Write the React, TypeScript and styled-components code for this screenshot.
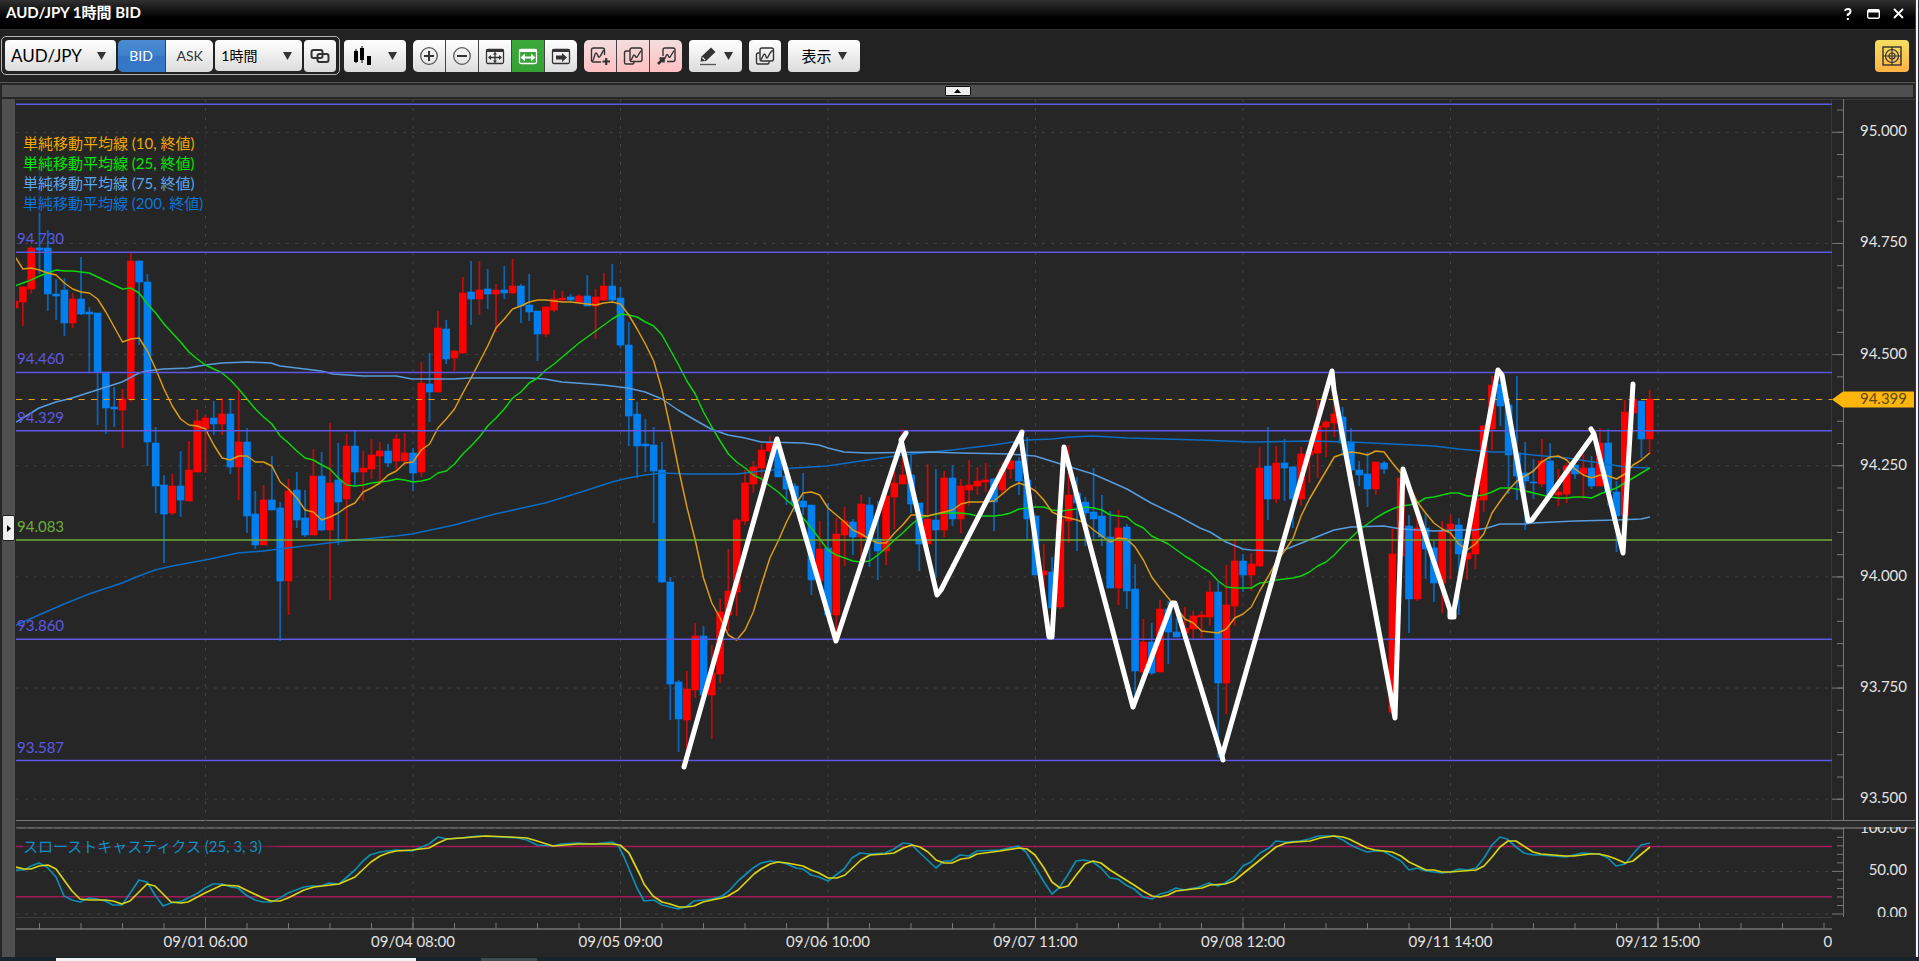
import React from "react";
import styled, { createGlobalStyle, css } from "styled-components";

const GlobalStyle = createGlobalStyle`
  *, *::before, *::after { box-sizing: border-box; }
  body { margin: 0; background: #16262c; }
  button, select { font: inherit; color: inherit; margin: 0; }
  svg { display: block; }
`;

const FONT = `Lato, "Noto Sans CJK JP", sans-serif`;

/* ---------- window ---------- */

const Desktop = styled.div`
  height: 100vh;
  min-height: 480px;
  display: grid;
  grid-template-columns: minmax(0, 1fr) 4px;
  grid-template-rows: minmax(0, 1fr) 4px;
  background: #16262c;
  font-family: ${FONT};
  font-size: 15px;
  line-height: 20px;
`;

const Window = styled.main`
  display: flex;
  flex-direction: column;
  min-width: 0;
  background: #262626;
`;

const NeighbourEdge = styled.div`
  border-left: 1px solid #1c4351;
  border-right: 1px solid #1c4351;
  background: #f4f4f4;
`;

const Taskbar = styled.div`
  grid-column: 1 / -1;
  display: flex;
  gap: 65px;
  padding: 1px 0 0 56px;
  background: #16262c;
`;

const TaskbarItem = styled.span<{ $width: number; $color: string }>`
  width: ${(p) => p.$width}px;
  background: ${(p) => p.$color};
`;

const TitleBar = styled.header`
  height: 29px;
  flex: none;
  display: flex;
  align-items: center;
  justify-content: space-between;
  padding: 0 9px 6px 6px;
  background: linear-gradient(#303030, #000 18px);
  color: #fff;
`;

const Title = styled.h1`
  margin: 0;
  font-size: 15px;
  font-weight: 700;
  line-height: 20px;
`;

const WindowControls = styled.div`
  display: flex;
  gap: 9px;
  padding-top: 4px;
`;

const WindowButton = styled.button`
  width: 16px;
  height: 16px;
  padding: 0;
  border: 0;
  background: none;
  color: #fff;
  display: grid;
  place-items: center;
`;

/* ---------- toolbar ---------- */

const Toolbar = styled.div`
  height: 54px;
  flex: none;
  display: flex;
  align-items: center;
  gap: 7px;
  padding: 0 6px 1px 1px;
  border-top: 1px solid #333;
  border-bottom: 1px solid #555;
  background: #222;
`;

const SymbolGroup = styled.div`
  display: flex;
  align-items: center;
  gap: 2px;
  height: 39px;
  width: 339px;
  padding: 0 3px;
  margin-right: -3px;
  border: 1px solid #b4b4b4;
  border-radius: 5px;
`;

const face = css`
  border: 0;
  background: linear-gradient(#fff, #dcdcdc);
  color: #000;
`;

const SelectBox = styled.label<{ $width: number; $size: number }>`
  display: grid;
  align-items: center;
  width: ${(p) => p.$width}px;
  height: 31px;
  font-size: ${(p) => p.$size}px;

  > select, > svg { grid-area: 1 / 1; }
  > svg { justify-self: end; margin-right: 10px; pointer-events: none; }
  > select {
    ${face}
    appearance: none;
    width: 100%;
    height: 100%;
    padding: 0 6px;
    border-radius: 4px;
  }
`;

const ButtonGroup = styled.div`
  display: flex;
  gap: 1px;
  border-radius: 5px;
  overflow: hidden;
  background: #444;
`;

type Tone = "plain" | "blue" | "green" | "pink" | "amber";

const tones: Record<Tone, string> = {
  plain: "linear-gradient(#fff, #dcdcdc)",
  blue: "linear-gradient(#4a8bd3, #3f80cb 48%, #3476c4 50%, #3578c8)",
  green: "linear-gradient(#3ba93b, #35a135)",
  pink: "linear-gradient(#f3dede, #ffbfc1)",
  amber: "linear-gradient(#f3df62, #ffb244)",
};

const ToolButton = styled.button<{ $width?: number; $tone?: Tone; $round?: boolean; $gap?: number }>`
  display: flex;
  align-items: center;
  justify-content: center;
  gap: ${(p) => p.$gap ?? 7}px;
  flex: none;
  width: ${(p) => p.$width ?? 32}px;
  height: 32px;
  padding: 0;
  border: 0;
  border-radius: ${(p) => (p.$round ? 4 : 0)}px;
  background: ${(p) => tones[p.$tone ?? "plain"]};
  color: ${(p) => (p.$tone === "blue" || p.$tone === "green" ? "#fff" : "#333")};
`;

const Caption = styled.span<{ $size?: number }>`
  color: ${(p) => (p.$size ? "inherit" : "#000")};
  font-size: ${(p) => p.$size ?? 15}px;
`;

const Spacer = styled.span`
  flex: 1;
`;

/* ---------- chart frame ---------- */

const TopStrip = styled.div`
  flex: none;
  height: 12px;
  margin: 2px;
  display: flex;
  justify-content: center;
  background: #4f4f4f;
`;

const StripHandle = styled.button`
  width: 26px;
  height: 10px;
  margin-top: 1px;
  padding: 0;
  border: 1px solid #111;
  border-radius: 1px;
  background: #eee;
  display: grid;
  place-items: center;
`;

const Body = styled.div`
  flex: 1;
  min-height: 0;
  display: grid;
  grid-template-columns: 13px minmax(0, 1fr);
  gap: 1px;
  padding-left: 2px;
`;

const SideStrip = styled.div`
  display: flex;
  align-items: center;
  background: #4f4f4f;
`;

const SideHandle = styled.button`
  width: 13px;
  height: 26px;
  padding: 0;
  border: 1px solid #222;
  border-radius: 2px;
  background: #eee;
  display: grid;
  place-items: center;
`;

const Panels = styled.div`
  display: grid;
  grid-template-columns: minmax(0, 1fr) 83px;
  grid-template-rows: minmax(0, 1fr) 6px 90px 40px;
`;

const Splitter = styled.div`
  grid-column: 1 / -1;
  border-top: 1px solid #777;
  margin: -1px 0 0;
  background: #2b2b2b;
`;

const Panel = styled.section<{ $sub?: boolean }>`
  position: relative;
  min-width: 0;
  min-height: 0;
  overflow: hidden;
  box-shadow: ${(p) => (p.$sub ? "inset 0 2px #5c5c5c" : "inset 0 1px #3a3a3a")};
  > svg { position: absolute; inset: 0; width: 100%; height: 100%; }
`;

const Legend = styled.ul<{ $top: number; $width: number }>`
  position: absolute;
  left: 7px;
  top: ${(p) => p.$top}px;
  width: ${(p) => p.$width}px;
  margin: 0;
  padding: 0;
  list-style: none;
  background: linear-gradient(90deg, rgba(38, 38, 38, 0.7) 90%, rgba(38, 38, 38, 0));
`;

const LegendItem = styled.li<{ $color: string }>`
  color: ${(p) => p.$color};
  white-space: nowrap;
  height: 20px;
`;

const AxisSvg = styled.svg`
  width: 100%;
  height: 100%;
  overflow: hidden;
  font-family: ${FONT};
  font-size: 15px;
`;

/* ---------- data ---------- */

type Candle = [up: 0 | 1, high: number, top: number, bottom: number, low: number];

const FIRST_X = 22.9;
const STEP = 8.3;
const candleX = (i: number) => FIRST_X + STEP * (i - 1);

const candles: Candle[] = [
  [1, 299, 301, 308, 310], [1, 286, 287, 302, 326], [1, 246, 248, 289, 294], [0, 167, 248, 250, 274],
  [0, 230, 248, 294, 311], [0, 279, 294, 296, 320], [0, 278, 290, 323, 336], [1, 293, 299, 323, 328],
  [0, 257, 299, 314, 315], [0, 307, 312, 314, 373], [0, 313, 313, 372, 425], [0, 372, 372, 408, 434],
  [0, 387, 407, 409, 427], [1, 389, 399, 410, 448], [1, 252, 261, 399, 402], [0, 261, 261, 282, 345],
  [0, 274, 282, 442, 466], [0, 427, 443, 486, 513], [0, 475, 485, 514, 563], [1, 474, 486, 513, 515],
  [0, 451, 486, 500, 517], [1, 441, 470, 501, 501], [1, 409, 421, 472, 472], [1, 415, 418, 429, 473],
  [0, 401, 418, 424, 435], [1, 398, 414, 424, 435], [0, 398, 414, 467, 474], [1, 390, 442, 467, 500],
  [0, 428, 442, 516, 533], [0, 491, 514, 545, 549], [1, 485, 500, 545, 545], [0, 456, 500, 510, 510],
  [0, 502, 508, 581, 641], [1, 479, 491, 581, 615], [0, 472, 490, 520, 528], [0, 490, 518, 535, 537],
  [1, 449, 476, 535, 535], [0, 452, 476, 530, 531], [1, 423, 483, 530, 600], [0, 443, 480, 502, 545],
  [1, 434, 446, 499, 540], [0, 431, 446, 472, 487], [1, 451, 468, 472, 501], [1, 439, 455, 469, 479],
  [1, 442, 451, 456, 482], [0, 444, 451, 463, 467], [1, 434, 439, 461, 470], [1, 433, 453, 461, 465],
  [0, 448, 453, 473, 491], [1, 362, 383, 472, 477], [0, 353, 384, 392, 422], [1, 311, 328, 392, 392],
  [0, 320, 329, 359, 364], [1, 350, 351, 358, 371], [1, 277, 293, 353, 354], [0, 261, 292, 299, 325],
  [1, 261, 290, 299, 315], [0, 269, 289, 294, 309], [1, 284, 290, 294, 332], [0, 266, 290, 293, 299],
  [1, 259, 286, 293, 294], [0, 284, 286, 306, 323], [0, 274, 305, 312, 321], [0, 311, 311, 334, 361],
  [1, 306, 307, 334, 337], [1, 290, 299, 310, 312], [1, 291, 298, 300, 301], [0, 294, 297, 300, 302],
  [1, 294, 296, 302, 302], [0, 275, 296, 306, 306], [1, 289, 297, 306, 339], [1, 273, 286, 300, 301],
  [0, 264, 286, 300, 302], [0, 287, 298, 345, 348], [0, 322, 345, 416, 446], [0, 402, 414, 446, 478],
  [0, 419, 444, 446, 472], [0, 427, 445, 471, 523], [0, 442, 470, 582, 583], [0, 577, 582, 684, 720],
  [0, 680, 682, 719, 752], [1, 671, 689, 720, 757], [1, 623, 636, 690, 698], [0, 626, 636, 695, 695],
  [1, 645, 673, 695, 739], [1, 599, 612, 674, 683], [1, 549, 591, 615, 631], [1, 518, 520, 592, 616],
  [1, 470, 483, 521, 525], [1, 461, 467, 484, 493], [1, 444, 450, 468, 491], [1, 436, 443, 451, 460],
  [0, 441, 447, 477, 477], [0, 469, 476, 489, 505], [0, 483, 486, 503, 512], [0, 473, 501, 507, 515],
  [0, 505, 505, 580, 595], [1, 521, 549, 581, 588], [0, 503, 548, 615, 622], [1, 518, 534, 615, 633],
  [1, 507, 521, 535, 566], [0, 519, 522, 537, 555], [1, 495, 504, 537, 562], [0, 497, 505, 539, 567],
  [0, 501, 539, 551, 580], [1, 482, 496, 551, 565], [1, 472, 483, 497, 529], [1, 429, 475, 484, 484],
  [0, 454, 475, 504, 513], [0, 503, 503, 544, 571], [1, 464, 519, 544, 544], [0, 469, 520, 530, 577],
  [1, 471, 478, 530, 537], [0, 465, 478, 519, 526], [1, 479, 486, 519, 533], [1, 460, 485, 490, 506],
  [1, 467, 481, 486, 495], [1, 463, 480, 482, 492], [0, 478, 479, 502, 531], [1, 462, 469, 490, 495],
  [1, 460, 461, 469, 479], [0, 457, 461, 481, 495], [0, 437, 480, 519, 540], [0, 516, 516, 575, 575],
  [1, 544, 571, 575, 613], [0, 557, 572, 608, 633], [1, 517, 519, 607, 609], [1, 445, 495, 521, 543],
  [0, 477, 493, 503, 551], [0, 497, 502, 513, 546], [0, 468, 512, 519, 539], [0, 495, 516, 537, 546],
  [0, 511, 537, 588, 588], [1, 510, 528, 588, 605], [0, 524, 527, 591, 609], [0, 564, 589, 671, 697],
  [1, 619, 642, 672, 672], [0, 623, 642, 673, 675], [1, 600, 609, 672, 672], [0, 601, 609, 632, 664],
  [0, 618, 632, 637, 637], [1, 607, 628, 633, 637], [1, 611, 616, 629, 639], [1, 611, 615, 617, 638],
  [1, 581, 592, 617, 626], [0, 582, 592, 683, 758], [1, 565, 605, 683, 714], [1, 539, 561, 606, 626],
  [0, 554, 561, 575, 592], [1, 553, 564, 575, 591], [1, 447, 468, 566, 567], [0, 427, 466, 499, 520],
  [1, 446, 463, 499, 503], [0, 439, 463, 468, 501], [0, 466, 467, 499, 528], [1, 447, 454, 499, 506],
  [1, 439, 451, 455, 483], [1, 400, 426, 453, 478], [1, 420, 422, 427, 457], [1, 390, 414, 423, 437],
  [0, 407, 417, 443, 456], [0, 428, 442, 470, 473], [0, 461, 470, 475, 486], [0, 452, 474, 489, 507],
  [1, 462, 462, 489, 495], [0, 461, 463, 469, 474], [1, 529, 554, 712, 713], [1, 477, 478, 556, 556],
  [0, 515, 526, 599, 633], [1, 518, 528, 599, 601], [0, 514, 528, 549, 579], [0, 541, 548, 583, 602],
  [1, 521, 531, 583, 613], [1, 515, 524, 529, 579], [0, 518, 525, 554, 615], [1, 548, 553, 559, 580],
  [1, 478, 498, 554, 569], [1, 425, 426, 500, 512], [1, 376, 385, 429, 450], [0, 378, 384, 406, 426],
  [0, 403, 405, 455, 494], [0, 376, 453, 476, 500], [0, 442, 473, 481, 530], [0, 459, 482, 483, 499],
  [1, 439, 461, 484, 487], [0, 443, 461, 495, 495], [1, 469, 492, 495, 506], [1, 463, 466, 494, 503],
  [0, 460, 465, 474, 479], [1, 454, 468, 474, 499], [0, 456, 468, 486, 489], [1, 428, 443, 486, 486],
  [0, 429, 443, 492, 506], [0, 481, 492, 516, 552], [1, 400, 412, 515, 540], [1, 395, 399, 413, 433],
  [0, 401, 401, 439, 458], [1, 390, 399, 439, 454],
];

const sma10 = [
  256, 269, 268, 270, 273, 275, 283, 289, 292, 293, 299, 312, 327, 342, 339, 338, 351, 369, 389, 406, 419, 425, 426,
  429, 445, 458, 460, 456, 456, 462, 462, 466, 482, 489, 498, 510, 512, 520, 517, 513, 507, 503, 492, 488, 483, 475,
  471, 463, 462, 450, 444, 428, 419, 409, 393, 378, 362, 346, 328, 319, 309, 306, 302, 300, 300, 301, 302, 302, 303,
  304, 305, 303, 302, 304, 315, 329, 344, 361, 390, 428, 469, 507, 540, 578, 603, 618, 635, 640, 630, 612, 584, 558,
  541, 522, 506, 493, 492, 495, 508, 515, 522, 530, 534, 539, 543, 543, 533, 525, 515, 515, 516, 514, 512, 510, 504,
  502, 502, 502, 501, 494, 487, 483, 486, 491, 500, 512, 516, 518, 520, 523, 530, 536, 542, 538, 539, 547, 560, 577,
  588, 598, 608, 619, 623, 631, 632, 633, 629, 618, 614, 607, 591, 577, 562, 551, 539, 516, 499, 485, 471, 457, 454,
  452, 453, 455, 451, 452, 463, 473, 485, 502, 513, 523, 529, 533, 544, 550, 544, 534, 513, 501, 490, 481, 476, 471,
  462, 457, 456, 460, 469, 475, 478, 475, 476, 479, 474, 465, 460, 453,
];

const sma25 = [
  286, 283, 280, 276, 273, 270, 271, 271, 272, 273, 277, 281, 285, 289, 288, 293, 304, 313, 324, 333, 342, 352, 359,
  365, 369, 373, 380, 389, 399, 409, 417, 424, 436, 443, 451, 458, 460, 465, 469, 478, 485, 486, 485, 483, 482, 481,
  479, 480, 482, 481, 479, 473, 471, 464, 454, 446, 437, 426, 418, 409, 398, 392, 383, 378, 370, 364, 357, 350, 343,
  337, 331, 325, 319, 314, 315, 317, 322, 326, 335, 350, 365, 381, 394, 412, 427, 441, 454, 462, 468, 475, 479, 486,
  492, 500, 507, 518, 528, 539, 550, 555, 558, 561, 562, 561, 555, 548, 540, 533, 525, 518, 516, 514, 513, 513, 513,
  514, 516, 516, 516, 515, 513, 509, 508, 507, 507, 510, 511, 510, 509, 507, 508, 510, 515, 516, 517, 524, 528, 536,
  540, 544, 550, 556, 561, 567, 572, 581, 587, 588, 588, 588, 583, 582, 580, 579, 578, 576, 572, 566, 562, 555, 546,
  538, 530, 524, 518, 513, 509, 506, 505, 503, 498, 497, 495, 493, 493, 496, 496, 495, 492, 488, 488, 489, 491, 493,
  495, 497, 498, 498, 497, 497, 498, 494, 491, 488, 483, 478, 473, 468,
];

const sma75 =
  "16,422 31,413 39,408 56,402 72,398 97,390 122,382 139,373 147,371 163,369 188,368 205,365 222,363 247,362 271,363 280,366 305,369 321,371 333,374 363,376 396,376 412,379 454,379 470,378 529,378 545,379 562,382 603,385 628,388 645,392 662,399 678,410 695,420 711,429 728,435 745,438 761,442 803,443 819,445 828,448 844,452 867,453 930,452 960,453 1010,454 1035,456 1067,466 1093,474 1127,489 1151,503 1176,515 1200,528 1210,532 1226,542 1243,549 1251,550 1277,551 1284,550 1309,540 1334,530 1351,527 1384,526 1401,529 1434,531 1459,530 1475,530 1487,528 1500,524 1525,524 1533,523 1575,521 1616,520 1641,519 1650,517";

const sma200 =
  "16,625 39,615 64,604 89,594 122,583 139,576 155,570 172,566 205,560 238,553 263,551 296,547 329,543 354,540 396,536 412,534 454,525 495,514 545,503 578,493 612,482 628,478 645,475 662,473 687,474 737,474 761,471 794,468 827,466 861,461 902,455 952,450 993,445 1027,440 1052,439 1070,437 1093,436 1127,438 1200,440 1251,442 1309,441 1351,442 1392,444 1434,446 1459,449 1492,452 1508,452 1533,455 1567,458 1600,463 1625,467 1650,468";

const swing =
  "684,767 777,439 836,641 902,440 906,433 901,440 937,595 941,590 1022,432 1021,438 1049,637 1052,637 1064,447 1133,707 1172,603 1175,603 1223,760 1222,756 1332,371 1334,390 1395,718 1403,469 1450,610 1450,617 1454,617 1454,610 1498,370 1502,375 1528,521 1532,520 1594,434 1591,429 1594,434 1623,553 1633,384";

const slowK =
  "16,870 24,870 31,866 39,863 47,867 56,877 64,896 72,900 80,902 89,898 97,899 105,901 113,905 122,905 131,892 139,880 147,882 155,895 163,906 171,903 182,901 190,897 198,893 205,888 213,884 222,884 231,887 238,888 246,895 255,900 263,902 271,902 280,898 288,893 296,890 304,887 312,886 321,886 329,883 339,884 347,877 355,870 363,861 370,855 380,852 388,851 396,850 412,851 429,844 438,837 447,839 461,838 478,836 502,837 518,838 527,840 537,845 553,846 561,844 578,843 594,844 612,842 618,845 624,857 637,888 644,901 654,900 662,905 678,909 686,907 694,901 703,900 712,899 722,896 729,891 738,881 753,868 761,863 770,861 779,862 787,864 796,868 803,869 811,875 819,877 828,881 836,875 844,869 852,858 860,853 870,854 885,853 894,849 903,843 911,844 920,853 936,868 944,861 951,861 960,855 969,856 977,851 1000,850 1018,846 1026,852 1035,867 1044,882 1052,894 1059,888 1067,876 1076,861 1084,860 1093,862 1101,868 1110,878 1118,879 1126,885 1134,889 1143,897 1152,899 1160,894 1168,892 1176,888 1184,890 1199,887 1209,883 1218,886 1225,883 1234,877 1243,866 1251,862 1260,853 1269,848 1276,841 1286,842 1300,841 1309,839 1318,836 1334,836 1343,840 1349,844 1357,848 1367,852 1375,851 1383,851 1401,861 1409,870 1417,868 1426,871 1434,872 1442,873 1450,872 1459,869 1468,870 1476,868 1484,858 1492,845 1500,837 1507,839 1516,847 1524,853 1533,855 1541,855 1566,857 1582,853 1599,854 1608,858 1616,866 1625,864 1633,854 1641,845 1650,843";

const slowD =
  "16,867 24,869 31,869 39,866 48,865 56,869 72,891 80,899 89,900 105,900 113,901 122,904 130,901 147,884 155,886 163,894 171,902 181,903 188,902 205,893 222,885 238,886 246,890 263,898 271,901 280,901 288,898 304,890 314,887 339,884 355,877 371,862 380,856 388,853 396,851 412,850 429,848 438,843 447,839 461,838 486,836 510,837 527,838 537,841 553,846 578,844 594,844 612,844 620,845 629,853 640,875 644,884 653,896 662,902 670,904 679,907 686,907 694,906 703,902 712,900 722,898 728,896 738,890 754,874 761,869 770,864 778,862 787,863 803,866 811,870 819,873 828,878 837,878 845,875 861,860 870,855 885,854 894,853 903,848 912,845 920,847 928,852 936,860 944,863 952,863 961,859 969,858 977,854 1000,851 1019,848 1027,849 1035,855 1044,868 1052,882 1060,888 1068,886 1077,874 1085,864 1093,861 1101,863 1110,870 1126,880 1134,885 1143,891 1152,896 1160,897 1168,895 1176,891 1202,888 1210,885 1225,884 1234,881 1260,860 1276,847 1286,843 1295,842 1310,841 1320,838 1334,836 1343,837 1349,839 1359,844 1367,848 1375,850 1392,852 1401,856 1409,862 1426,870 1434,870 1442,872 1450,872 1476,870 1484,866 1492,857 1500,847 1508,841 1516,841 1533,852 1541,854 1566,856 1574,856 1590,854 1599,854 1608,856 1616,859 1625,863 1633,861 1650,847";

/* ---------- scales ---------- */

const PLOT = { left: 16, width: 1816, top: 99, height: 722 };
const SUB = { top: 827, height: 90 };

const priceY = (p: number) => 132.3 + (95 - p) * 444.6;
const stochY = (v: number) => 914 - v * 0.852;
const pct = (v: number, origin: number, size: number) => `${((v - origin) / size) * 100}%`;
const plotX = (x: number) => pct(x, PLOT.left, PLOT.width);
const plotY = (y: number) => pct(y, PLOT.top, PLOT.height);
const subY = (y: number) => pct(y, SUB.top, SUB.height);

const dates = ["09/01 06:00", "09/04 08:00", "09/05 09:00", "09/06 10:00", "09/07 11:00", "09/08 12:00", "09/11 14:00", "09/12 15:00", "09/13 16:00"];
const dateX = (i: number) => 205.5 + i * 207.5;
const majorPrices = [95, 94.75, 94.5, 94.25, 94, 93.75, 93.5];
const minorPrices = Array.from({ length: 33 }, (_, i) => 95.05 - i * 0.05);
const minorTimes = Array.from({ length: 44 }, (_, i) => 39.5 + i * 41.5);

const PURPLE = "#5d58e6";
const levels = [
  { price: 95.063, color: PURPLE, label: "" },
  { price: 94.73, color: PURPLE, label: "94.730" },
  { price: 94.46, color: PURPLE, label: "94.460" },
  { price: 94.329, color: PURPLE, label: "94.329" },
  { price: 94.083, color: "#6fae38", label: "94.083" },
  { price: 93.86, color: PURPLE, label: "93.860" },
  { price: 93.587, color: PURPLE, label: "93.587" },
];

const averages = [
  { name: "単純移動平均線 (10, 終値)", color: "#f0a800" },
  { name: "単純移動平均線 (25, 終値)", color: "#00e600" },
  { name: "単純移動平均線 (75, 終値)", color: "#5ba6ee" },
  { name: "単純移動平均線 (200, 終値)", color: "#0b74d6" },
];

const series = (values: number[]) => values.map((v, i) => `${candleX(i).toFixed(1)},${v}`).join(" ");

/* ---------- chart pieces ---------- */

function VerticalGrid() {
  return (
    <g stroke="#414141" strokeDasharray="3 6">
      {dates.slice(0, 8).map((d, i) => (
        <line key={d} x1={plotX(dateX(i))} x2={plotX(dateX(i))} y1="0" y2="100%" />
      ))}
    </g>
  );
}

function PriceChart() {
  return (
    <svg role="img" aria-label="AUD/JPY">
      <VerticalGrid />
      <g stroke="#414141" strokeDasharray="3 6">
        {majorPrices.map((p) => (
          <line key={p} x1="0" x2="100%" y1={plotY(priceY(p))} y2={plotY(priceY(p))} />
        ))}
      </g>
      <line x1="100%" x2="100%" y1="0" y2="100%" stroke="#4a4a4a" />
      <svg
        width="100%"
        height="100%"
        viewBox={`${PLOT.left} ${PLOT.top} ${PLOT.width} ${PLOT.height}`}
        preserveAspectRatio="none"
      >
        {candles.map(([up, high, top, bottom, low], i) => {
          const x = candleX(i);
          return (
            <g key={i} fill={up ? "#ff0000" : "#007ff0"}>
              <rect x={x - 0.9} y={high} width="1.8" height={low - high} opacity="0.7" />
              <rect x={x - 3.8} y={top - 0.3} width="7.6" height={Math.max(bottom - top, 1) + 0.6} />
            </g>
          );
        })}
        <g fill="none" strokeWidth="1.5" strokeLinejoin="round">
          <polyline points={sma200} stroke="#0b6cc4" />
          <polyline points={sma75} stroke="#579bdc" />
          <polyline points={series(sma25)} stroke="#0bd40b" />
          <polyline points={series(sma10)} stroke="#d99b16" />
        </g>
      </svg>
      {levels.map((l) => (
        <line
          key={l.price}
          x1="0"
          x2="100%"
          y1={plotY(priceY(l.price))}
          y2={plotY(priceY(l.price))}
          stroke={l.color}
          strokeWidth="1.5"
        />
      ))}
      <line
        x1="0"
        x2="100%"
        y1={plotY(399.5)}
        y2={plotY(399.5)}
        stroke="#e0a41c"
        strokeWidth="1.2"
        strokeDasharray="6.2 6.3"
      />
      <g fontFamily={FONT} fontSize="15">
        {levels.map((l) => (
          <text key={l.price} x="1" y={plotY(priceY(l.price))} dy="-8" fill={l.color}>
            {l.label}
          </text>
        ))}
      </g>
      <svg
        width="100%"
        height="100%"
        viewBox={`${PLOT.left} ${PLOT.top} ${PLOT.width} ${PLOT.height}`}
        preserveAspectRatio="none"
      >
        <polyline points={swing} fill="none" stroke="#fff" strokeWidth="5" strokeLinejoin="round" strokeLinecap="round" />
      </svg>
    </svg>
  );
}

function PriceAxis() {
  const y = plotY(399.5);
  return (
    <AxisSvg>
      <g stroke="#777">
        <line x1="11.5" x2="11.5" y1="0" y2="100%" />
        {minorPrices.map((p) => (
          <line key={p} x1="5" x2="11" y1={plotY(priceY(p))} y2={plotY(priceY(p))} />
        ))}
        {majorPrices.map((p) => (
          <line key={p} x1="0" x2="11" y1={plotY(priceY(p))} y2={plotY(priceY(p))} />
        ))}
      </g>
      <g fill="#e2e2e2" textAnchor="end">
        {majorPrices.map((p) => (
          <text key={p} x="75" y={plotY(priceY(p))} dy="4">
            {p.toFixed(3)}
          </text>
        ))}
      </g>
      <svg y={y} overflow="visible">
        <path d="M0 0L11-8H82V8H11Z" fill="#ffb60a" />
        <text x="75" y="4" textAnchor="end" fill="#5c4a1c">
          94.399
        </text>
      </svg>
    </AxisSvg>
  );
}

function Stochastic() {
  return (
    <svg role="img" aria-label="スローストキャスティクス">
      <VerticalGrid />
      <g stroke="#414141" strokeDasharray="3 6">
        {[100, 50, 0].map((v) => (
          <line key={v} x1="0" x2="100%" y1={subY(stochY(v))} y2={subY(stochY(v))} />
        ))}
      </g>
      <g stroke="#a4195a" strokeWidth="1.6">
        <line x1="0" x2="100%" y1={subY(846.5)} y2={subY(846.5)} />
        <line x1="0" x2="100%" y1={subY(896.7)} y2={subY(896.7)} />
      </g>
      <svg
        width="100%"
        height="100%"
        viewBox={`${PLOT.left} ${SUB.top} ${PLOT.width} ${SUB.height}`}
        preserveAspectRatio="none"
      >
        <g fill="none" strokeWidth="1.7" strokeLinejoin="round">
          <polyline points={slowK} stroke="#0f8db0" />
          <polyline points={slowD} stroke="#d6d414" />
        </g>
      </svg>
    </svg>
  );
}

function StochasticAxis() {
  const ticks = Array.from({ length: 11 }, (_, i) => i * 10);
  return (
    <AxisSvg>
      <g stroke="#777">
        <line x1="11.5" x2="11.5" y1="0" y2="100%" />
        {ticks.map((v) => (
          <line key={v} x1={v % 50 ? 5 : 0} x2="11" y1={subY(stochY(v))} y2={subY(stochY(v))} />
        ))}
      </g>
      <g fill="#e2e2e2" textAnchor="end">
        {[100, 50, 0].map((v) => (
          <text key={v} x="75" y={subY(stochY(v))} dy="4">
            {v.toFixed(2)}
          </text>
        ))}
      </g>
    </AxisSvg>
  );
}

function TimeAxis() {
  return (
    <AxisSvg>
      <line x1="0" x2="100%" y1="0.5" y2="0.5" stroke="#3c3c3c" />
      <g stroke="#777">
        <line x1="0" x2="100%" y1="12" y2="12" strokeWidth="1.4" />
        {minorTimes.map((x) => (
          <line key={x} x1={plotX(x)} x2={plotX(x)} y1="6" y2="12" />
        ))}
        {dates.map((d, i) => (
          <line key={d} x1={plotX(dateX(i))} x2={plotX(dateX(i))} y1="0" y2="12" />
        ))}
      </g>
      <g fill="#e2e2e2" textAnchor="middle">
        {dates.map((d, i) => (
          <text key={d} x={plotX(dateX(i))} y="30">
            {d}
          </text>
        ))}
      </g>
    </AxisSvg>
  );
}

/* ---------- icons ---------- */

const DownArrow = () => (
  <svg width="9" height="8" viewBox="0 0 9 8">
    <path d="M0 0H9L4.5 8Z" fill="#333" />
  </svg>
);

const Glyph = ({ children }: { children: React.ReactNode }) => (
  <svg width="20" height="20" viewBox="0 0 20 20" fill="none" stroke="currentColor">
    {children}
  </svg>
);

const LinkGlyph = () => (
  <Glyph>
    <rect x="1.5" y="4" width="11" height="8" rx="2" strokeWidth="2" />
    <rect x="7.5" y="8" width="11" height="8" rx="2" strokeWidth="2" />
  </Glyph>
);

const CandleGlyph = () => (
  <svg width="17" height="20" viewBox="0 0 17 20" fill="#000">
    <path d="M0 5h4v11H0zM1.500 3h1v14h-1zM6 2h4v12H6zM7.500 0h1v17h-1zM13 10h4v9h-4z" />
  </svg>
);

const ZoomGlyph = ({ plus }: { plus?: boolean }) => (
  <Glyph>
    <circle cx="10" cy="10" r="8.3" stroke="#555" strokeWidth="1.3" />
    <path d={plus ? "M5 10H15M10 5V15" : "M5 10H15"} strokeWidth="2" />
  </Glyph>
);

const PaneGlyph = ({ children }: { children: React.ReactNode }) => (
  <Glyph>
    <rect x="1.5" y="3.5" width="17" height="14" rx="1.5" strokeWidth="1.3" />
    <path d="M1.5 4.500H18.5" strokeWidth="3" />
    {children}
  </Glyph>
);

const FitAllGlyph = () => (
  <PaneGlyph>
    <path d="M4 11.500H16M10 6.500V16.500" strokeWidth="1.3" />
    <path d="M3 11.500l3-2.500v5zM17 11.500l-3-2.500v5zM10 6l-2 2.500h4zM10 17l-2-2.500h4z" fill="currentColor" stroke="none" />
  </PaneGlyph>
);

const FitWidthGlyph = () => (
  <PaneGlyph>
    <path d="M5 11.500H15" strokeWidth="2" />
    <path d="M2.500 11.500l4.500-4v8zM17.500 11.500l-4.500-4v8z" fill="currentColor" stroke="none" />
  </PaneGlyph>
);

const ShiftGlyph = () => (
  <PaneGlyph>
    <path d="M5 9.500h6V7l5 4.500-5 4.500v-2.500H5z" fill="currentColor" stroke="none" />
  </PaneGlyph>
);

const AddChartGlyph = () => (
  <Glyph>
    <path d="M11 16H3.500Q1.500 16 1.500 14V4Q1.500 2 3.500 2H12.500Q14.500 2 14.500 4V9" strokeWidth="1.4" />
    <path d="M2 15C4 15 4.500 7 6 7S8 12 9.500 11 12 6 14 4" strokeWidth="1.4" />
    <path d="M12.500 15.500H20M16.200 12V19" strokeWidth="2.2" />
  </Glyph>
);

const CopyChartGlyph = () => (
  <Glyph>
    <path d="M7 5H3Q1.500 5 1.500 6.500V16.500Q1.500 18 3 18H9.500Q11 18 11 16" strokeWidth="1.4" />
    <rect x="7" y="2" width="12" height="13.5" rx="2" strokeWidth="1.4" />
    <path d="M7.500 14C9.500 14 9.500 9 11 9S12.500 12.500 14 11 16.500 6 18.500 4.500" strokeWidth="1.4" />
  </Glyph>
);

const ExportChartGlyph = () => (
  <Glyph>
    <path d="M7 10V4Q7 2 9 2H17Q19 2 19 4V13.500Q19 15.500 17 15.500H11" strokeWidth="1.4" />
    <path d="M8 13C10 13 9.500 8.500 11 8.500S12.500 12.500 14 11 16.500 6 18.500 4.500" strokeWidth="1.4" />
    <path d="M2 18L7 13M3.500 12.500H7.500V16.500" strokeWidth="2.6" />
  </Glyph>
);

const PencilGlyph = () => (
  <svg width="18" height="20" viewBox="0 0 18 20" fill="#333">
    <path d="M1.500 15.500L2.500 10.500L12 1.500L16.500 6L7 15Z" />
    <path d="M3.500 11.500L6 14.200" stroke="#eee" strokeWidth="1.2" />
    <path d="M1 18.500H17" stroke="#555" strokeWidth="1.3" />
  </svg>
);

const LayersGlyph = () => (
  <Glyph>
    <path d="M5 7H3Q1.500 7 1.500 8.500V16.500Q1.500 18 3 18H12.500Q14 18 14 16.500V15.500" strokeWidth="1.4" />
    <rect x="5" y="2" width="13.5" height="13" rx="2" strokeWidth="1.4" />
    <path d="M5.500 14C7.500 13 8 8 9.500 8S10.500 12 12 12 14.500 5 18 4.500" strokeWidth="1.4" />
  </Glyph>
);

const TargetGlyph = () => (
  <Glyph>
    <rect x="1" y="1" width="18" height="18" strokeWidth="1.4" />
    <circle cx="10" cy="10" r="6.5" strokeWidth="1.2" />
    <circle cx="10" cy="10" r="3" strokeWidth="1.2" />
    <path d="M1 10H19M10 1V19" strokeWidth="1.2" />
  </Glyph>
);

/* ---------- page ---------- */

export default function App() {
  return (
    <Desktop>
      <GlobalStyle />
      <Window>
        <TitleBar>
          <Title>AUD/JPY 1時間 BID</Title>
          <WindowControls>
            <WindowButton aria-label="ヘルプ">
              <svg width="8" height="12" viewBox="0 0 8 12" fill="none" stroke="#fff" strokeWidth="2">
                <path d="M1 3Q1.500 1 4 1T6.500 3.200T3.800 6.500V8M3.800 10V12" />
              </svg>
            </WindowButton>
            <WindowButton aria-label="最大化">
              <svg width="13" height="10" viewBox="0 0 13 10" fill="none" stroke="#fff">
                <rect x="0.7" y="0.7" width="11.6" height="8.6" rx="1.5" strokeWidth="1.4" />
                <path d="M1 2H12" strokeWidth="3" />
              </svg>
            </WindowButton>
            <WindowButton aria-label="閉じる">
              <svg width="11" height="11" viewBox="0 0 11 11" fill="none" stroke="#fff" strokeWidth="1.8">
                <path d="M1 1L10 10M10 1L1 10" />
              </svg>
            </WindowButton>
          </WindowControls>
        </TitleBar>

        <Toolbar>
          <SymbolGroup>
            <SelectBox $width={111} $size={17}>
              <select aria-label="通貨ペア" defaultValue="AUD/JPY">
                <option>AUD/JPY</option>
              </select>
              <DownArrow />
            </SelectBox>
            <ButtonGroup>
              <ToolButton $width={47} $tone="blue">
                <Caption $size={14}>BID</Caption>
              </ToolButton>
              <ToolButton $width={48}>
                <Caption $size={14}>ASK</Caption>
              </ToolButton>
            </ButtonGroup>
            <SelectBox $width={87} $size={14}>
              <select aria-label="足種" defaultValue="1時間">
                <option>1時間</option>
              </select>
              <DownArrow />
            </SelectBox>
            <ToolButton $round aria-label="連動">
              <LinkGlyph />
            </ToolButton>
          </SymbolGroup>
          <ToolButton $width={62} $gap={17} $round aria-label="チャート種類">
            <CandleGlyph />
            <DownArrow />
          </ToolButton>
          <ButtonGroup>
            <ToolButton aria-label="拡大"><ZoomGlyph plus /></ToolButton>
            <ToolButton aria-label="縮小"><ZoomGlyph /></ToolButton>
            <ToolButton aria-label="全体表示"><FitAllGlyph /></ToolButton>
            <ToolButton $tone="green" aria-label="横幅調整"><FitWidthGlyph /></ToolButton>
            <ToolButton aria-label="右端へ"><ShiftGlyph /></ToolButton>
          </ButtonGroup>
          <ButtonGroup>
            <ToolButton $tone="pink" aria-label="指標追加"><AddChartGlyph /></ToolButton>
            <ToolButton $tone="pink" aria-label="指標複製"><CopyChartGlyph /></ToolButton>
            <ToolButton $tone="pink" aria-label="指標呼出"><ExportChartGlyph /></ToolButton>
          </ButtonGroup>
          <ToolButton $width={53} $round aria-label="描画">
            <PencilGlyph />
            <DownArrow />
          </ToolButton>
          <ToolButton $round aria-label="チャート一覧"><LayersGlyph /></ToolButton>
          <ToolButton $width={72} $gap={6} $round>
            <Caption>表示</Caption>
            <DownArrow />
          </ToolButton>
          <Spacer />
          <ToolButton $width={34} $tone="amber" $round aria-label="照準"><TargetGlyph /></ToolButton>
        </Toolbar>

        <TopStrip>
          <StripHandle aria-label="上部を開く">
            <svg width="7" height="4" viewBox="0 0 7 4"><path d="M0 4L3.500 0L7 4Z" /></svg>
          </StripHandle>
        </TopStrip>

        <Body>
          <SideStrip>
            <SideHandle aria-label="左側を開く">
              <svg width="4" height="7" viewBox="0 0 4 7"><path d="M0 0L4 3.500L0 7Z" /></svg>
            </SideHandle>
          </SideStrip>
          <Panels>
            <Panel>
              <PriceChart />
              <Legend $top={34} $width={200}>
                {averages.map((a) => (
                  <LegendItem key={a.name} $color={a.color}>{a.name}</LegendItem>
                ))}
              </Legend>
            </Panel>
            <Panel>
              <PriceAxis />
            </Panel>
            <Splitter />
            <Panel $sub>
              <Stochastic />
              <Legend $top={9} $width={260}>
                <LegendItem $color="#0f8fc0">スローストキャスティクス (25, 3, 3)</LegendItem>
              </Legend>
            </Panel>
            <Panel $sub>
              <StochasticAxis />
            </Panel>
            <TimeAxis />
          </Panels>
        </Body>
      </Window>
      <NeighbourEdge />
      <Taskbar>
        <TaskbarItem $width={360} $color="#f2f2f2" />
        <TaskbarItem $width={56} $color="#3d4b50" />
      </Taskbar>
    </Desktop>
  );
}
